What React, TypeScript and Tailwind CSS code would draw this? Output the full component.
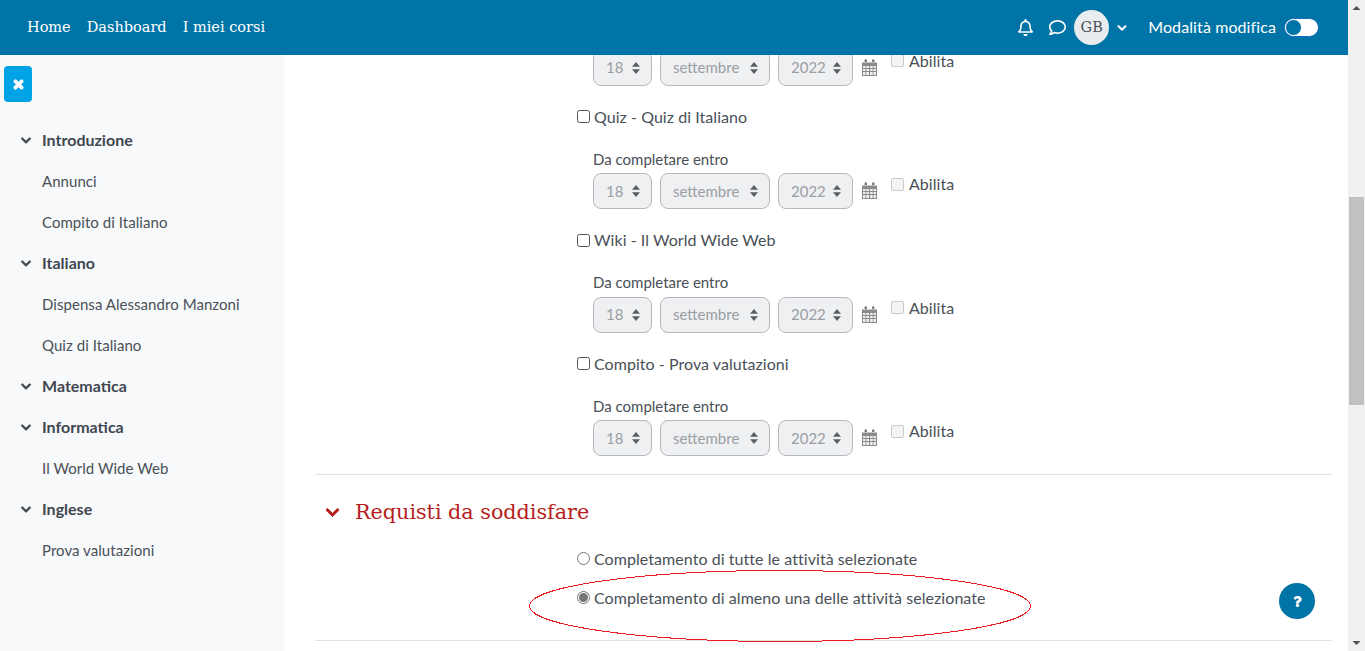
import { FaChevronDown, FaQuestion, FaRegBell, FaRegComment, FaTimes } from "react-icons/fa";

const sidebarItems = [
  { label: "Introduzione", section: true },
  { label: "Annunci" },
  { label: "Compito di Italiano" },
  { label: "Italiano", section: true },
  { label: "Dispensa Alessandro Manzoni" },
  { label: "Quiz di Italiano" },
  { label: "Matematica", section: true },
  { label: "Informatica", section: true },
  { label: "Il World Wide Web" },
  { label: "Inglese", section: true },
  { label: "Prova valutazioni" },
];

const activities = ["Quiz - Quiz di Italiano", "Wiki - Il World Wide Web", "Compito - Prova valutazioni"];

function CalendarIcon() {
  return (
    <svg width="15" height="17" viewBox="0 0 15 17" className="shrink-0">
      <path d="M0 3.500h15V17H0z" fill="#8a8a8a" />
      <path d="M2.500 3V1.500a1.200 1.200 0 0 1 2.500 0V3zM10 3V1.500a1.200 1.200 0 0 1 2.500 0V3z" fill="#7b7b7b" />
      <path
        d="M1 7h2.500v2H1zM4.300 7h2.700v2H4.300zM8 7h2.700v2H8zM11.500 7H14v2h-2.500zM1 10h2.500v2H1zM4.300 10h2.700v2H4.300zM8 10h2.700v2H8zM11.500 10H14v2h-2.500zM1 13h2.500v3H1zM4.300 13h2.700v3H4.300zM8 13h2.700v3H8zM11.500 13H14v3h-2.500z"
        fill="#f0eeea"
      />
    </svg>
  );
}

function DisabledSelect({ value, width }: { value: string; width: string }) {
  return (
    <div className={`flex h-9 items-center justify-between rounded-lg border border-[#b5b8bd] bg-[#eff0f2] pl-[12px] pr-[11px] text-[#9a9ea3] ${width}`}>
      <span>{value}</span>
      <svg width="8" height="12" viewBox="0 0 8 12">
        <path d="M4 0l4 4.800H0zM4 12L0 7.200h8z" fill="#5a5f66" />
      </svg>
    </div>
  );
}

function DateRow({ className = "" }: { className?: string }) {
  return (
    <div className={`flex items-start ${className}`}>
      <div className="flex gap-2">
        <DisabledSelect value="18" width="w-[59px]" />
        <DisabledSelect value="settembre" width="w-[110px]" />
        <DisabledSelect value="2022" width="w-[75px]" />
      </div>
      <div className="ml-[9px] mt-[9px]">
        <CalendarIcon />
      </div>
      <div className="ml-[14px] flex items-center gap-[5px]">
        <span className="h-[13px] w-[13px] rounded-[2px] border border-[#c9cacc] bg-[#f4f4f5]" />
        <span className="pb-[1px] text-[16px] leading-[21px] tracking-[0.05px]">Abilita</span>
      </div>
    </div>
  );
}

export default function App() {
  return (
    <div className="flex h-[651px] overflow-hidden bg-white text-[15px] text-[#495057] [font-family:Lato,sans-serif]">
      <div className="flex min-w-0 flex-1 flex-col">
        <header className="relative z-10 flex h-[55px] shrink-0 items-center justify-between bg-[#0074a6] pl-[27px] pr-[29px] text-white">
          <nav className="flex gap-4 text-[14.500px] [font-family:'DejaVu_Serif',serif]">
            <span>Home</span>
            <span>Dashboard</span>
            <span>I miei corsi</span>
          </nav>
          <div className="flex items-center">
            <FaRegBell className="text-[17px]" />
            <FaRegComment className="ml-[15px] text-[17px]" />
            <div className="ml-[8px] flex h-[35px] w-[35px] items-center justify-center rounded-full bg-[#e9ecef] text-[14.500px] text-[#495057] [font-family:'DejaVu_Serif',serif]">
              GB
            </div>
            <FaChevronDown className="ml-[8px] text-[10px]" strokeWidth={30} />
            <span className="ml-[21px] pb-[2px] text-[16px] tracking-[0.1px]">Modalità modifica</span>
            <div className="ml-[8px] flex h-[19px] w-[35px] items-center justify-start rounded-full border border-[#0f6cbf] bg-white">
              <span className="h-[17px] w-[17px] rounded-full border border-white bg-[#0074a6]" />
            </div>
          </div>
        </header>

        <div className="flex min-h-0 flex-1">
          <aside className="w-[284px] shrink-0 bg-[#f8f9fa] pt-[11px]">
            <button className="ml-[4px] flex h-9 w-7 items-center justify-center rounded bg-[#00a3e6] text-white">
              <FaTimes className="text-[13px]" strokeWidth={50} />
            </button>
            <ul className="mt-[18px]">
              {sidebarItems.map((item) => (
                <li key={item.label} className="flex h-[41px] items-center pl-[20px]">
                  {item.section ? (
                    <>
                      <FaChevronDown className="w-[12px] text-[11px] text-[#3f4750]" strokeWidth={30} />
                      <span className="ml-[10px] pb-[1px] text-[16px] font-bold text-[#3f4750]">{item.label}</span>
                    </>
                  ) : (
                    <span className="ml-[22px] tracking-[0.05px]">{item.label}</span>
                  )}
                </li>
              ))}
            </ul>
          </aside>

          <main className="relative min-w-0 flex-1 overflow-hidden pl-[31px] pr-[16px]">
            <div className="-mt-[5.500px] pl-[262px]">
              <div className="pl-[16px]">
                <DateRow />
              </div>
              {activities.map((name) => (
                <div key={name} className="mt-[20px]">
                  <label className="flex h-[22px] items-center gap-[4px] text-[16px] tracking-[0.05px]">
                    <span className="h-[13px] w-[13px] rounded-[2.500px] border border-[#555] bg-white" />
                    {name}
                  </label>
                  <div className="mt-[20px] pl-[16px]">
                    <p className="h-[22px] leading-[22px]">Da completare entro</p>
                    <DateRow className="mt-[3.500px]" />
                  </div>
                </div>
              ))}
            </div>

            <hr className="mt-[18px] border-[#dee2e6]" />

            <div className="mt-[22px] flex items-center">
              <FaChevronDown className="ml-[10px] text-[15px] text-[#b71c1c]" strokeWidth={30} />
              <h3 className="ml-[15px] text-[20.700px] text-[#b71c1c] [font-family:'DejaVu_Serif',serif]">Requisti da soddisfare</h3>
            </div>

            <div className="mt-[19.500px] pl-[262px] text-[16px] tracking-[0.06px]">
              <label className="flex h-[22px] items-center gap-[4px]">
                <span className="h-[13px] w-[13px] rounded-full border border-[#767676] bg-white" />
                Completamento di tutte le attività selezionate
              </label>
              <label className="mt-[17px] flex h-[22px] items-center gap-[4px]">
                <span className="flex h-[13px] w-[13px] items-center justify-center rounded-full border border-[#767676] bg-white">
                  <span className="h-[9px] w-[9px] rounded-full bg-[#767676]" />
                </span>
                Completamento di almeno una delle attività selezionate
              </label>
            </div>

            <hr className="mt-[31px] border-[#dee2e6]" />

            <svg width="503" height="73" viewBox="0 0 503 73" className="absolute left-[245px] top-[515px]">
              <ellipse cx="251" cy="36" rx="250.500" ry="35.500" fill="none" stroke="#ed1c24" strokeWidth="1" shapeRendering="crispEdges" />
            </svg>
            <button className="absolute left-[995px] top-[528px] flex h-9 w-9 items-center justify-center rounded-full bg-[#0074a6] text-white">
              <FaQuestion className="text-[11px]" strokeWidth={30} />
            </button>
          </main>
        </div>
      </div>

      <div className="flex w-[17px] shrink-0 flex-col items-center bg-[#f1f1f1]">
        <svg width="17" height="17" viewBox="0 0 17 17" className="shrink-0">
          <path d="M8.500 6L12.500 10h-8z" fill="#505050" />
        </svg>
        <div className="mt-[180px] h-[208px] w-[15px] shrink-0 bg-[#c1c1c1]" />
        <div className="flex-1" />
        <svg width="17" height="17" viewBox="0 0 17 17" className="shrink-0">
          <path d="M4.500 7h8l-4 4z" fill="#505050" />
        </svg>
      </div>
    </div>
  );
}
